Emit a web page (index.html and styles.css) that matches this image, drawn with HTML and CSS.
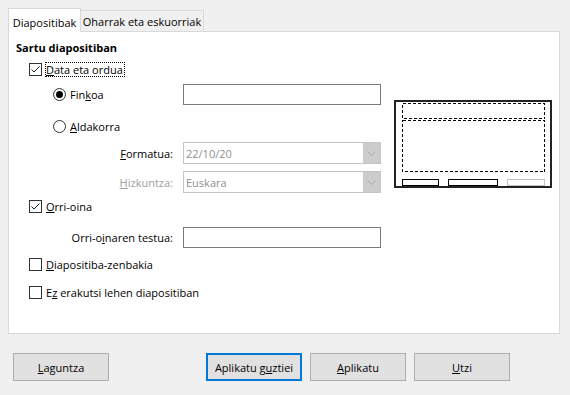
FILE: index.html
```html
<!DOCTYPE html>
<html lang="eu">
<head>
    <meta charset="UTF-8">
    <title>Goiburukoa eta orri-oina</title>
    <link rel="stylesheet" href="styles.css">
</head>
<body>
    <div class="dialog">
        <div class="tabs">
            <div class="tab tab-active">Diapositibak</div>
            <div class="tab tab-notes">Oharrak eta eskuorriak</div>
        </div>

        <div class="panel">
            <div class="heading">Sartu diapositiban</div>

            <div class="check row-date">
                <span class="box checked"><svg width="11" height="11" viewBox="0 0 11 11"><polyline points="1.5,5.5 4,8 9.5,2.5" fill="none" stroke="#222" stroke-width="1"/></svg></span>
                <span class="focus"><u>D</u>ata eta ordua</span>
            </div>

            <div class="date-area">
                <div class="date-form">
                    <div class="form-row row-fixed">
                        <div class="radio"><span class="dot on"></span>Fin<u>k</u>oa</div>
                        <div class="field"></div>
                    </div>
                    <div class="form-row row-var">
                        <div class="radio"><span class="dot"></span><u>A</u>ldakorra</div>
                    </div>
                    <div class="form-row row-format">
                        <span class="lbl"><u>F</u>ormatua:</span>
                        <div class="combo"><span class="combo-text">22/10/20</span><span class="arrow"><svg width="9" height="5" viewBox="0 0 9 5"><polyline points="0.5,0.5 4.5,4.5 8.5,0.5" fill="none" stroke="#a9a9a9"/></svg></span></div>
                    </div>
                    <div class="form-row row-lang">
                        <span class="lbl disabled"><u>H</u>izkuntza:</span>
                        <div class="combo"><span class="combo-text">Euskara</span><span class="arrow"><svg width="9" height="5" viewBox="0 0 9 5"><polyline points="0.5,0.5 4.5,4.5 8.5,0.5" fill="none" stroke="#a9a9a9"/></svg></span></div>
                    </div>
                </div>

                <div class="preview">
                    <svg width="158" height="88" viewBox="0 0 158 88" shape-rendering="crispEdges">
                        <rect x="1" y="1" width="156" height="86" fill="#fff" stroke="#222" stroke-width="2"/>
                        <rect x="8.5" y="3.5" width="142" height="15" fill="none" stroke="#000" stroke-dasharray="3 2"/>
                        <rect x="8.5" y="20.5" width="142" height="51" fill="none" stroke="#000" stroke-dasharray="3 2"/>
                        <rect x="8.5" y="79.5" width="36" height="6" fill="none" stroke="#000"/>
                        <rect x="54.5" y="79.5" width="49" height="6" fill="none" stroke="#000"/>
                        <rect x="113.5" y="79.5" width="37" height="6" fill="none" stroke="#c3c3c3"/>
                    </svg>
                </div>
            </div>

            <div class="check row-footer">
                <span class="box checked"><svg width="11" height="11" viewBox="0 0 11 11"><polyline points="1.5,5.5 4,8 9.5,2.5" fill="none" stroke="#222" stroke-width="1"/></svg></span>
                <span class="text"><u>O</u>rri-oina</span>
            </div>

            <div class="form-row row-footer-text">
                <span class="lbl">Orri-o<u>i</u>naren testua:</span>
                <div class="field"></div>
            </div>

            <div class="check row-number">
                <span class="box"></span>
                <span class="text"><u>D</u>iapositiba-zenbakia</span>
            </div>

            <div class="check row-first">
                <span class="box"></span>
                <span class="text">E<u>z</u> erakutsi lehen diapositiban</span>
            </div>
        </div>

        <div class="buttons">
            <button class="btn"><u>L</u>aguntza</button>
            <div class="btn-group">
                <button class="btn btn-focus">Aplikatu g<u>u</u>ztiei</button>
                <button class="btn"><u>A</u>plikatu</button>
                <button class="btn"><u>U</u>tzi</button>
            </div>
        </div>
    </div>
</body>
</html>
```

FILE: styles.css
```css
body {
    margin: 0;
    background-color: #f0f0f0;
    font-family: "Open Sans", sans-serif;
    font-size: 11px;
    color: #000;
}

u {
    text-underline-offset: 1px;
}

.dialog {
    padding: 8px 0 0 8px;
}

/* tabs */
.tabs {
    display: flex;
    align-items: flex-end;
    height: 23px;
}

.tab {
    box-sizing: border-box;
    height: 21px;
    line-height: 21px;
    border: 1px solid #d9d9d9;
    border-left: none;
    border-bottom: none;
    background: #f0f0f0;
    text-align: center;
}

.tab-active {
    position: relative;
    z-index: 1;
    width: 73px;
    height: 24px;
    line-height: 27px;
    margin-bottom: -1px;
    border-left: 1px solid #d9d9d9;
    background: #fff;
}

.tab-notes {
    width: 123px;
}

/* main panel */
.panel {
    box-sizing: border-box;
    width: 552px;
    height: 303px;
    border: 1px solid #d9d9d9;
    background: #fff;
}

.heading {
    margin: 6px 0 0 7px;
    height: 20px;
    line-height: 20px;
    font-weight: 700;
}

.check {
    display: flex;
    align-items: center;
    height: 20px;
    margin-left: 20px;
}

.box {
    box-sizing: border-box;
    width: 13px;
    height: 13px;
    border: 1px solid #333;
    background: #fff;
    margin-right: 3px;
    display: flex;
}

.text {
    padding-left: 1px;
}

.focus {
    border: 1px dotted #000;
    padding: 0 1px 0 0;
    line-height: 13px;
}

.row-date { margin-top: 1px; }
.row-footer { margin-top: 3px; }
.row-number { margin-top: 6px; }
.row-first { margin-top: 8px; }

/* date area with preview */
.date-area {
    display: flex;
    margin: 5px 0 0 44px;
}

.form-row {
    display: grid;
    grid-template-columns: 120px 198px;
    column-gap: 10px;
    align-items: center;
}

.row-fixed { height: 21px; }
.row-var { height: 20px; margin-top: 11px; }
.row-format { height: 22px; margin-top: 6px; }
.row-lang { height: 22px; margin-top: 7px; }

.row-footer-text {
    height: 21px;
    margin: 11px 0 0 44px;
}

.radio {
    display: flex;
    align-items: center;
}

.dot {
    box-sizing: border-box;
    width: 13px;
    height: 13px;
    border: 1px solid #333;
    border-radius: 50%;
    margin-right: 4px;
    display: flex;
    align-items: center;
    justify-content: center;
}

.dot.on::after {
    content: "";
    width: 7px;
    height: 7px;
    border-radius: 50%;
    background: #000;
}

.lbl {
    text-align: right;
}

.lbl.disabled {
    color: #a0a0a0;
}

.field {
    box-sizing: border-box;
    height: 21px;
    border: 1px solid #7a7a7a;
    background: #fff;
}

.combo {
    box-sizing: border-box;
    height: 22px;
    border: 1px solid #c4c4c4;
    background: #fff;
    display: flex;
    align-items: center;
    color: #8f8f8f;
}

.combo-text {
    flex: 1;
    padding-left: 2px;
}

.arrow {
    width: 17px;
    height: 100%;
    background: #cccccc;
    display: flex;
    align-items: center;
    justify-content: center;
}

.preview {
    margin: 16px 0 0 13px;
    width: 158px;
    height: 88px;
}

.preview svg {
    display: block;
}

/* buttons */
.buttons {
    display: flex;
    margin: 19px 0 0 5px;
}

.btn-group {
    display: flex;
    gap: 8px;
    margin-left: 97px;
}

.btn {
    box-sizing: border-box;
    width: 96px;
    height: 28px;
    margin: 0;
    padding: 0;
    border: 1px solid #adadad;
    background: #e1e1e1;
    font-family: inherit;
    font-size: 11px;
    color: #000;
}

.btn-focus {
    border: 2px solid #0078d7;
}
```
